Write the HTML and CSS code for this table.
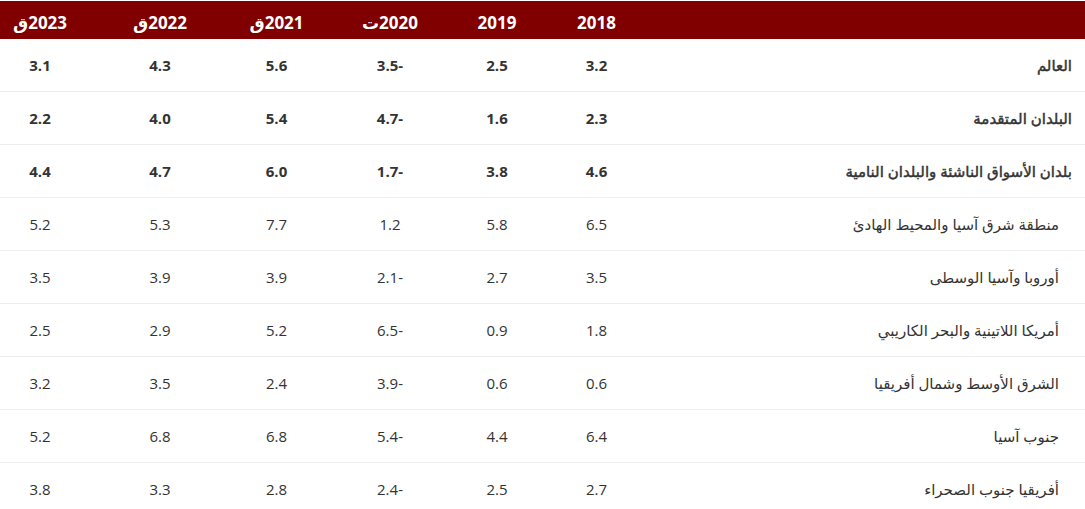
FILE: index.html
```html
<!DOCTYPE html>
<html lang="ar" dir="rtl">
<head>
<meta charset="utf-8">
<link rel="stylesheet" href="styles.css">
</head>
<body>
<div class="frame">
  <div class="table">
    <div class="row head">
      <div class="cell label"></div>
      <div class="cell">2018</div>
      <div class="cell">2019</div>
      <div class="cell">2020ت</div>
      <div class="cell">2021ق</div>
      <div class="cell">2022ق</div>
      <div class="cell">2023ق</div>
    </div>
    <div class="row bold">
      <div class="cell label">العالم</div>
      <div class="cell">3.2</div><div class="cell">2.5</div><div class="cell">-3.5</div><div class="cell">5.6</div><div class="cell">4.3</div><div class="cell">3.1</div>
    </div>
    <div class="row bold">
      <div class="cell label">البلدان المتقدمة</div>
      <div class="cell">2.3</div><div class="cell">1.6</div><div class="cell">-4.7</div><div class="cell">5.4</div><div class="cell">4.0</div><div class="cell">2.2</div>
    </div>
    <div class="row bold">
      <div class="cell label">بلدان الأسواق الناشئة والبلدان النامية</div>
      <div class="cell">4.6</div><div class="cell">3.8</div><div class="cell">-1.7</div><div class="cell">6.0</div><div class="cell">4.7</div><div class="cell">4.4</div>
    </div>
    <div class="row">
      <div class="cell label sub">منطقة شرق آسيا والمحيط الهادئ</div>
      <div class="cell">6.5</div><div class="cell">5.8</div><div class="cell">1.2</div><div class="cell">7.7</div><div class="cell">5.3</div><div class="cell">5.2</div>
    </div>
    <div class="row">
      <div class="cell label sub">أوروبا وآسيا الوسطى</div>
      <div class="cell">3.5</div><div class="cell">2.7</div><div class="cell">-2.1</div><div class="cell">3.9</div><div class="cell">3.9</div><div class="cell">3.5</div>
    </div>
    <div class="row">
      <div class="cell label sub">أمريكا اللاتينية والبحر الكاريبي</div>
      <div class="cell">1.8</div><div class="cell">0.9</div><div class="cell">-6.5</div><div class="cell">5.2</div><div class="cell">2.9</div><div class="cell">2.5</div>
    </div>
    <div class="row">
      <div class="cell label sub">الشرق الأوسط وشمال أفريقيا</div>
      <div class="cell">0.6</div><div class="cell">0.6</div><div class="cell">-3.9</div><div class="cell">2.4</div><div class="cell">3.5</div><div class="cell">3.2</div>
    </div>
    <div class="row">
      <div class="cell label sub">جنوب آسيا</div>
      <div class="cell">6.4</div><div class="cell">4.4</div><div class="cell">-5.4</div><div class="cell">6.8</div><div class="cell">6.8</div><div class="cell">5.2</div>
    </div>
    <div class="row">
      <div class="cell label sub">أفريقيا جنوب الصحراء</div>
      <div class="cell">2.7</div><div class="cell">2.5</div><div class="cell">-2.4</div><div class="cell">2.8</div><div class="cell">3.3</div><div class="cell">3.8</div>
    </div>
  </div>
</div>
</body>
</html>
```

FILE: styles.css
```css
html, body {
  margin: 0;
  padding: 0;
  background: #ffffff;
}
body {
  font-family: "Open Sans", "DejaVu Sans", sans-serif;
  color: #333333;
}
.frame {
  width: 1085px;
  height: 509px;
  overflow: hidden;
  padding-top: 1px;
  box-sizing: border-box;
}
.table {
  display: flex;
  flex-direction: column;
  width: 1106px;
}
.row {
  display: grid;
  grid-template-columns: 440px 97px 102px 112px 115px 118px 122px;
  height: 52px;
  border-top: 1px solid #eeeeee;
  align-items: center;
  font-size: 15px;
}
.row.head {
  height: 37px;
  border-top: none;
  background: #800000;
  color: #ffffff;
  font-weight: 700;
  font-size: 17px;
  padding-top: 6px;
  box-sizing: border-box;
}
.row.head + .row {
  border-top-color: #800000;
}
.row.bold {
  font-weight: 700;
}
.cell {
  text-align: center;
  white-space: nowrap;
}
.cell.label {
  text-align: right;
  padding-right: 13px;
  font-size: 15px;
}
.row.bold .cell.label {
  font-weight: 400;
  -webkit-text-stroke: 0.45px #333333;
}
.cell.label.sub {
  padding-right: 26px;
}
```
